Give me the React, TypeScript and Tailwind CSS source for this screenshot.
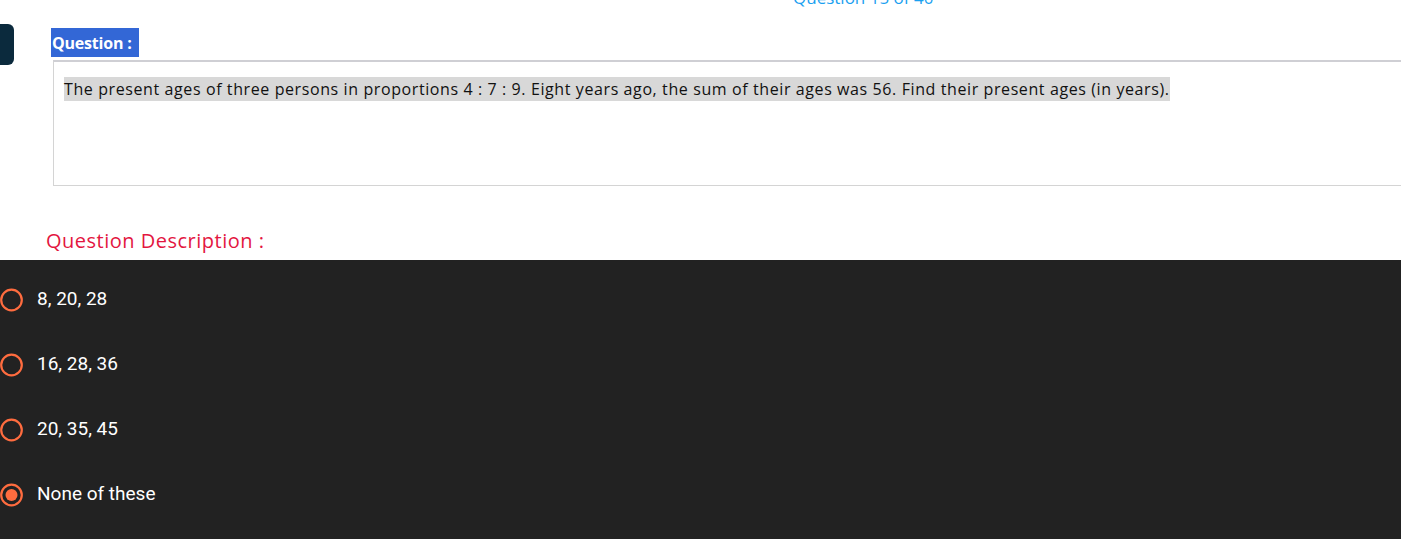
import React from "react";

const options = [
  { label: "8, 20, 28", checked: false },
  { label: "16, 28, 36", checked: false },
  { label: "20, 35, 45", checked: false },
  { label: "None of these", checked: true },
];

function Radio({ checked }: { checked: boolean }) {
  return (
    <svg width="24" height="24" viewBox="0 0 24 24" className="shrink-0">
      <circle cx="11.5" cy="12" r="10.3" fill="none" stroke="#ff6c3f" strokeWidth="2.2" />
      {checked && <circle cx="11.5" cy="12" r="6" fill="#ff6c3f" />}
    </svg>
  );
}

export default function App() {
  return (
    <div className="w-[1401px] h-[539px] overflow-hidden bg-white flex flex-col">
      <div className="relative h-[260px] shrink-0 font-['Open_Sans',sans-serif]">
        <div className="absolute left-[793px] top-[-12px] text-[17px] font-medium text-[#1aa0f0] leading-[20px]">
          Question 15 of 40
        </div>
        <div className="flex pt-[24px]">
          <div className="w-[14px] h-[41px] rounded-r-[6px] bg-[#0b2a3d] shrink-0" />
          <div className="ml-[37px] flex-1 min-w-0">
            <div className="mt-[4px] w-fit bg-[#3367d6] text-white text-[16px] font-bold leading-[31px] h-[29px] pl-[1px] pr-[7px] tracking-[-0.2px] overflow-hidden">
              Question :
            </div>
            <div className="ml-[2px] mt-[3px] h-[126px] w-[1400px] border-t-2 border-t-[#cfcfd4] border-l border-l-[#d4d4d4] border-b border-b-[#d4d4d4] pl-[10px] pt-[15px]">
              <span className="bg-[#d8d8d8] text-[#111] text-[16px] font-medium leading-[24px] tracking-[0.6px] inline-block">
                The present ages of three persons in proportions 4 : 7 : 9. Eight years ago, the sum of their ages was 56. Find their present ages (in years).
              </span>
            </div>
            <div className="ml-[-5px] mt-[43px] text-[20px] text-[#e3163f] leading-[24px] tracking-[0.5px]">
              Question Description :
            </div>
          </div>
        </div>
      </div>
      <div className="flex-1 bg-[#222222] pt-[7px] font-['Roboto',sans-serif]">
        {options.map((o) => (
          <div key={o.label} className="h-[65px] flex items-center">
            <Radio checked={o.checked} />
            <span className="ml-[13px] text-white text-[19px]">{o.label}</span>
          </div>
        ))}
      </div>
    </div>
  );
}
